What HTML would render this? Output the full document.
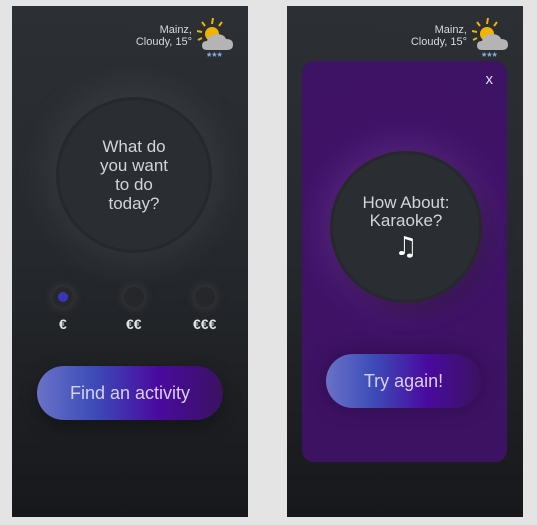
<!DOCTYPE html>
<html><head><meta charset="utf-8"><style>
*{margin:0;padding:0;box-sizing:border-box}
body{width:537px;height:525px;background:#e4e4e4;position:relative;overflow:hidden;font-family:"Liberation Sans",sans-serif}
.panel{position:absolute;top:6px;width:236px;height:511px;background:linear-gradient(180deg,#2c3034 0%,#25282c 50%,#17181b 100%);overflow:hidden}
.wx{position:absolute;right:56px;top:19px;color:#d8d8d8;font-size:11px;line-height:11.5px;text-align:right}
.ico{position:absolute;left:175px;top:11px}
.circle{position:absolute;border-radius:50%;background:#2a2d31;border:3px solid #26282b;color:#d4d4d4;text-align:center;display:flex;align-items:center;justify-content:center;flex-direction:column}
.dot{position:absolute;width:20px;height:20px;border-radius:50%;background:#25272b;box-shadow:0 0 8px 3px rgba(80,80,85,.35)}
.eur{position:absolute;color:#e4e4e4;font-size:14px;font-weight:bold;top:310px}
.btn{position:absolute;border-radius:28px;background:linear-gradient(90deg,#6a72c8 0%,#3c4db8 30%,#4a0aa0 65%,#3a1260 100%);color:#d8d0f0;font-size:18px;display:flex;align-items:center;justify-content:center;box-shadow:0 6px 18px rgba(0,0,0,.35)}
</style></head><body>
<div class="panel" style="left:12px">
  <div class="wx">Mainz,<br>Cloudy, 15°</div>
  <svg class="ico" width="50" height="45" viewBox="0 0 50 45">
    <g stroke="#f0b400" stroke-width="2"><line x1="25" y1="7" x2="26" y2="1"/><line x1="18" y1="9" x2="15" y2="5"/><line x1="32" y1="9" x2="35" y2="5"/><line x1="15" y1="15" x2="10" y2="14"/><line x1="15" y1="21" x2="11" y2="23"/></g>
    <circle cx="25" cy="17" r="7" fill="#f0b400"/>
    <path d="M20 33 Q15 33 15 28.5 Q15 24 20 24 Q22 17 30 17 Q37 17 39 22 Q46 22 46 27.5 Q46 33 40 33 Z" fill="#b4b4b4"/>
    <text x="20" y="43" fill="#8ab0e8" font-size="11" font-weight="bold" font-family="Liberation Sans" letter-spacing="1">***</text>
  </svg>
  <div class="circle" style="left:44px;top:91px;width:156px;height:156px;box-shadow:0 0 40px 8px rgba(200,200,210,.1);font-size:17px;line-height:19px">What do<br>you want<br>to do<br>today?</div>
  <div class="dot" style="left:41px;top:281px"><div style="position:absolute;left:5px;top:5px;width:10px;height:10px;border-radius:50%;background:#3a35b8"></div></div>
  <div class="dot" style="left:112px;top:281px"></div>
  <div class="dot" style="left:183px;top:281px"></div>
  <div class="eur" style="left:47px">€</div>
  <div class="eur" style="left:114px">€€</div>
  <div class="eur" style="left:181px">€€€</div>
  <div class="btn" style="left:25px;top:360px;width:186px;height:54px">Find an activity</div>
</div>
<div class="panel" style="left:287px">
  <div class="wx">Mainz,<br>Cloudy, 15°</div>
  <svg class="ico" width="50" height="45" viewBox="0 0 50 45">
    <g stroke="#f0b400" stroke-width="2"><line x1="25" y1="7" x2="26" y2="1"/><line x1="18" y1="9" x2="15" y2="5"/><line x1="32" y1="9" x2="35" y2="5"/><line x1="15" y1="15" x2="10" y2="14"/><line x1="15" y1="21" x2="11" y2="23"/></g>
    <circle cx="25" cy="17" r="7" fill="#f0b400"/>
    <path d="M20 33 Q15 33 15 28.5 Q15 24 20 24 Q22 17 30 17 Q37 17 39 22 Q46 22 46 27.5 Q46 33 40 33 Z" fill="#b4b4b4"/>
    <text x="20" y="43" fill="#8ab0e8" font-size="11" font-weight="bold" font-family="Liberation Sans" letter-spacing="1">***</text>
  </svg>
  <div style="position:absolute;left:15px;top:55px;width:205px;height:401px;border-radius:12px;background:radial-gradient(circle at 103px 165px,#4e1c78 0%,#3f1266 45%,#3d1262 100%)">
    <div style="position:absolute;right:14px;top:10px;color:#e0d8f0;font-size:15px">x</div>
    <div class="circle" style="left:28px;top:90px;width:152px;height:152px;box-shadow:0 0 30px 4px rgba(160,110,200,.2),8px 10px 20px rgba(0,0,0,.35);font-size:17px;line-height:18px">How About:<br>Karaoke?<div style="font-size:26px;line-height:26px;color:#fff;margin-top:4px;font-family:'DejaVu Sans',sans-serif">♫</div></div>
    <div class="btn" style="left:24px;top:293px;width:155px;height:54px;box-shadow:0 0 20px rgba(20,0,40,.4)">Try again!</div>
  </div>
</div>
</body></html>
